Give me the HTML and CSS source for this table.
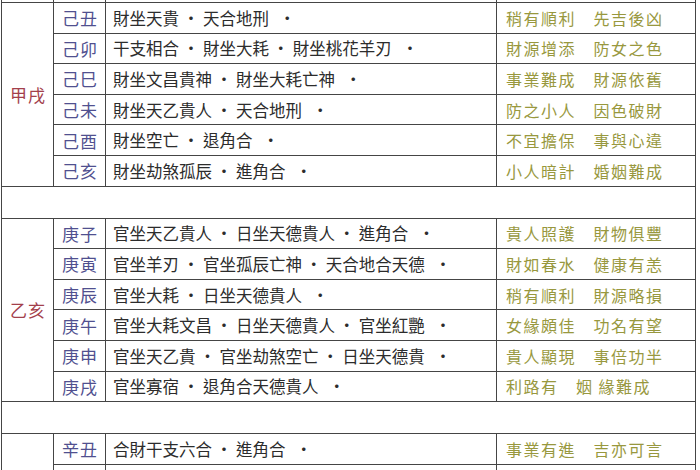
FILE: index.html
```html
<!DOCTYPE html>
<html lang="zh-Hant">
<head>
<meta charset="utf-8">
<title>流年表</title>
<link rel="stylesheet" href="styles.css">
</head>
<body>
<div class="page">
<table class="chart">
<colgroup><col class="c-pillar"><col class="c-branch"><col class="c-desc"><col class="c-fate"></colgroup>
<tbody>
<tr class="stub"><td></td><td></td><td></td><td></td></tr>

<tr class="row"><td class="pillar" rowspan="6">甲戌</td><td class="branch">己丑</td><td class="desc">財坐天貴 ・ 天合地刑<span class="end">・</span></td><td class="fate">稍有順利　先吉後凶</td></tr>
<tr class="row"><td class="branch">己卯</td><td class="desc">干支相合 ・ 財坐大耗 ・ 財坐桃花羊刃<span class="end">・</span></td><td class="fate">財源增添　防女之色</td></tr>
<tr class="row"><td class="branch">己巳</td><td class="desc">財坐文昌貴神 ・ 財坐大耗亡神<span class="end">・</span></td><td class="fate">事業難成　財源依舊</td></tr>
<tr class="row"><td class="branch">己未</td><td class="desc">財坐天乙貴人 ・ 天合地刑<span class="end">・</span></td><td class="fate">防之小人　因色破財</td></tr>
<tr class="row"><td class="branch">己酉</td><td class="desc">財坐空亡 ・ 退角合<span class="end">・</span></td><td class="fate">不宜擔保　事與心違</td></tr>
<tr class="row"><td class="branch">己亥</td><td class="desc">財坐劫煞孤辰 ・ 進角合<span class="end">・</span></td><td class="fate">小人暗計　婚姻難成</td></tr>

<tr class="gap"><td colspan="4"></td></tr>

<tr class="row"><td class="pillar" rowspan="6">乙亥</td><td class="branch">庚子</td><td class="desc">官坐天乙貴人 ・ 日坐天德貴人 ・ 進角合<span class="end">・</span></td><td class="fate">貴人照護　財物俱豐</td></tr>
<tr class="row"><td class="branch">庚寅</td><td class="desc">官坐羊刃 ・ 官坐孤辰亡神 ・ 天合地合天德<span class="end">・</span></td><td class="fate">財如春水　健康有恙</td></tr>
<tr class="row"><td class="branch">庚辰</td><td class="desc">官坐大耗 ・ 日坐天德貴人<span class="end">・</span></td><td class="fate">稍有順利　財源略損</td></tr>
<tr class="row"><td class="branch">庚午</td><td class="desc">官坐大耗文昌 ・ 日坐天德貴人 ・ 官坐紅艷<span class="end">・</span></td><td class="fate">女緣頗佳　功名有望</td></tr>
<tr class="row"><td class="branch">庚申</td><td class="desc">官坐天乙貴 ・ 官坐劫煞空亡 ・ 日坐天德貴<span class="end">・</span></td><td class="fate">貴人顯現　事倍功半</td></tr>
<tr class="row"><td class="branch">庚戌</td><td class="desc">官坐寡宿 ・ 退角合天德貴人<span class="end">・</span></td><td class="fate">利路有　姻 緣難成</td></tr>

<tr class="gap"><td colspan="4"></td></tr>

<tr class="row"><td class="pillar" rowspan="2"></td><td class="branch">辛丑</td><td class="desc">合財干支六合 ・ 進角合<span class="end">・</span></td><td class="fate">事業有進　吉亦可言</td></tr>
<tr class="row"><td class="branch">辛卯</td><td class="desc">合財支刑 ・ 日坐將星<span class="end">・</span></td><td class="fate">財源廣進　財源茂盛</td></tr>
</tbody>
</table>
</div>
</body>
</html>
```

FILE: styles.css
```css
html, body {
  margin: 0;
  padding: 0;
  background: #ffffff;
  width: 700px;
  height: 470px;
  overflow: hidden;
}

.page {
  padding-left: 1px;
}

.chart {
  border-collapse: collapse;
  table-layout: fixed;
  width: 694px;
  font-family: "Noto Sans CJK TC", "Noto Sans CJK SC", sans-serif;
}

.c-pillar { width: 52px; }
.c-branch { width: 52px; }
.c-desc { width: 391px; }
.c-fate { width: 199px; }

.chart td {
  border: 1px solid #454545;
  padding: 0;
  vertical-align: middle;
  white-space: nowrap;
  overflow: hidden;
}

.chart .stub td {
  border-top: none;
  height: 2px;
}

.row {
  height: 30.6px;
}

.gap {
  height: 32px;
}

.chart .pillar {
  text-align: center;
  color: #a3404c;
  font-size: 17px;
  letter-spacing: 1px;
  padding-left: 1px;
}

.chart .branch {
  text-align: center;
  color: #50508f;
  font-size: 17px;
  letter-spacing: 1px;
  padding-left: 1px;
}

.chart .desc {
  color: #2c2c2c;
  font-size: 16.5px;
  padding-left: 7px;
}

.end {
  padding-left: 10px;
}

.chart .fate {
  color: #98983e;
  font-size: 16px;
  letter-spacing: 1.5px;
  padding-left: 9px;
}
```
